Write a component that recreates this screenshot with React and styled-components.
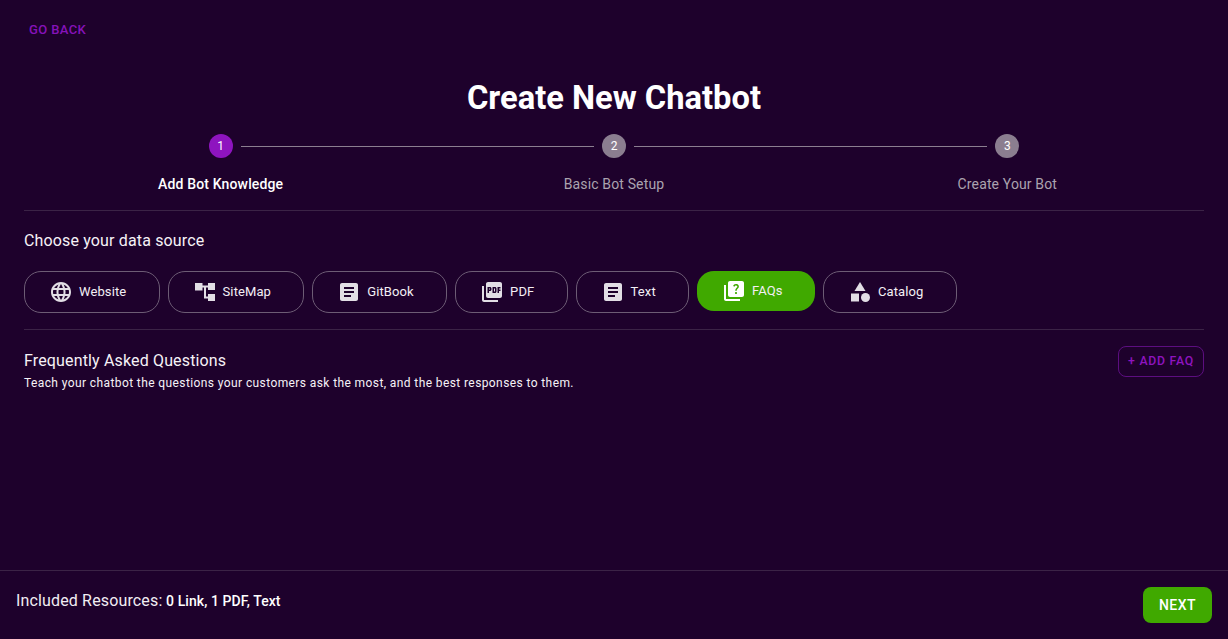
import React from "react";
import styled, { createGlobalStyle } from "styled-components";
import { MdLanguage, MdArticle, MdPictureAsPdf, MdQuiz, MdCategory } from "react-icons/md";

const GlobalStyle = createGlobalStyle`
  html, body {
    margin: 0;
    padding: 0;
    height: 100%;
    background: #1e012c;
  }
  body {
    font-family: Roboto, "Liberation Sans", sans-serif;
    color: #fff;
  }
  * {
    box-sizing: border-box;
  }
`;

const Page = styled.div`
  height: 639px;
  overflow: hidden;
  display: flex;
  flex-direction: column;
`;

const Content = styled.main`
  flex: 1;
  padding: 0 24px;
`;

const BackLink = styled.a`
  display: block;
  width: fit-content;
  padding: 21px 5px 0;
  font-size: 13px;
  line-height: 18px;
  font-weight: 500;
  letter-spacing: 0.37px;
  color: #8612b9;
`;

const Title = styled.h1`
  margin: 40px 0 0;
  text-align: center;
  font-size: 32.7px;
  line-height: 38px;
  font-weight: 700;
`;

const StepRow = styled.div`
  display: grid;
  grid-template-columns: 1fr 24px 2fr 24px 2fr 24px 1fr;
  align-items: center;
  margin-top: 17px;
`;

const StepDot = styled.div`
  grid-column: ${(p) => p.$col};
  width: 24px;
  height: 24px;
  border-radius: 50%;
  display: flex;
  align-items: center;
  justify-content: center;
  font-size: 12px;
  color: #fff;
  background: ${(p) => (p.$active ? "#8e14bf" : "#8b7e90")};
`;

const StepLine = styled.div`
  height: 1px;
  margin: 0 8px;
  background: #8b7e90;
`;

const StepLabels = styled.div`
  display: grid;
  grid-template-columns: repeat(3, 1fr);
  margin-top: 16px;
`;

const StepLabel = styled.div`
  text-align: center;
  font-size: 14px;
  line-height: 20px;
  letter-spacing: 0.14px;
  font-weight: ${(p) => (p.$active ? 500 : 400)};
  color: ${(p) => (p.$active ? "#fff" : "#aba3af")};
`;

const Divider = styled.hr`
  margin: ${(p) => p.$margin};
  border: 0;
  height: 1px;
  background: #3b2346;
`;

const SectionLabel = styled.div`
  margin-top: 20px;
  font-size: 16px;
  line-height: 20px;
  letter-spacing: 0.15px;
  color: #f6f2f7;
`;

const SourceRow = styled.div`
  display: flex;
  align-items: flex-start;
  gap: 8px;
  margin-top: 20px;
`;

const SourceButton = styled.button`
  display: flex;
  align-items: center;
  gap: 6px;
  height: ${(p) => (p.$selected ? "40px" : "42px")};
  padding: 0 32.3px 0 ${(p) => (p.$selected ? "25px" : "24px")};
  border: ${(p) => (p.$selected ? "0" : "1px solid #6d5c75")};
  border-radius: 17px;
  background: ${(p) => (p.$selected ? "#40a900" : "transparent")};
  color: #f3eff5;
  font-family: inherit;
  font-size: 13px;
  letter-spacing: 0.1px;
  svg {
    width: 24px;
    height: 24px;
    color: ${(p) => (p.$selected ? "#fff" : "#e2dee5")};
  }
`;

const SourceName = styled.span`
  padding-bottom: 2px;
`;

const FaqHeader = styled.div`
  display: flex;
  justify-content: space-between;
  align-items: flex-start;
`;

const FaqTitle = styled.div`
  margin-top: 5px;
  font-size: 16px;
  line-height: 20px;
  letter-spacing: 0.15px;
  color: #f6f2f7;
`;

const FaqHint = styled.div`
  margin-top: 3px;
  font-size: 12px;
  line-height: 18px;
  letter-spacing: 0.4px;
  color: #f6f2f7;
`;

const AddButton = styled.button`
  height: 31px;
  padding: 0 9px 2px;
  border: 1px solid #5c0e80;
  border-radius: 8px;
  background: transparent;
  color: #8e14bf;
  font-family: inherit;
  font-size: 12.25px;
  font-weight: 500;
  letter-spacing: 0.75px;
`;

const Footer = styled.footer`
  height: 69px;
  display: flex;
  justify-content: space-between;
  align-items: flex-start;
  padding: 16px 16px 0;
  border-top: 1px solid #3b2346;
`;

const Resources = styled.div`
  margin-top: 4px;
  font-size: 16px;
  line-height: 20px;
  letter-spacing: 0.15px;
  color: #f1edf3;
`;

const ResourceCount = styled.span`
  margin-left: -0.5px;
  font-size: 14px;
  font-weight: 500;
  letter-spacing: 0.07px;
  color: #fff;
`;

const NextButton = styled.button`
  width: 69px;
  height: 36px;
  border: 0;
  border-radius: 8px;
  background: #40a900;
  color: #fff;
  font-family: inherit;
  font-size: 14px;
  font-weight: 500;
  letter-spacing: 0.45px;
`;

// the sitemap glyph in the picture is not in the icon packages
function SiteMapIcon() {
  return (
    <svg viewBox="0 0 24 24" fill="currentColor">
      <path d="M2 3h7.5v2.5H15V3h7v7h-7V7.5h-2v9h2V14h7v7h-7v-2.5h-4v-11H9.5v3H2z" />
    </svg>
  );
}

const sources = [
  { label: "Website", Icon: MdLanguage },
  { label: "SiteMap", Icon: SiteMapIcon },
  { label: "GitBook", Icon: MdArticle },
  { label: "PDF", Icon: MdPictureAsPdf },
  { label: "Text", Icon: MdArticle },
  { label: "FAQs", Icon: MdQuiz, selected: true },
  { label: "Catalog", Icon: MdCategory },
];

export default function App() {
  return (
    <Page>
      <GlobalStyle />
      <Content>
        <BackLink>GO BACK</BackLink>
        <Title>Create New Chatbot</Title>
        <StepRow>
          <StepDot $col={2} $active>1</StepDot>
          <StepLine />
          <StepDot $col={4}>2</StepDot>
          <StepLine />
          <StepDot $col={6}>3</StepDot>
        </StepRow>
        <StepLabels>
          <StepLabel $active>Add Bot Knowledge</StepLabel>
          <StepLabel>Basic Bot Setup</StepLabel>
          <StepLabel>Create Your Bot</StepLabel>
        </StepLabels>
        <Divider $margin="16px 0 0" />
        <SectionLabel>Choose your data source</SectionLabel>
        <SourceRow>
          {sources.map(({ label, Icon, selected }) => (
            <SourceButton key={label} $selected={selected}>
              <Icon />
              <SourceName>{label}</SourceName>
            </SourceButton>
          ))}
        </SourceRow>
        <Divider $margin="16px 0" />
        <FaqHeader>
          <div>
            <FaqTitle>Frequently Asked Questions</FaqTitle>
            <FaqHint>Teach your chatbot the questions your customers ask the most, and the best responses to them.</FaqHint>
          </div>
          <AddButton>+ ADD FAQ</AddButton>
        </FaqHeader>
      </Content>
      <Footer>
        <Resources>
          Included Resources: <ResourceCount>0 Link, 1 PDF, Text</ResourceCount>
        </Resources>
        <NextButton>NEXT</NextButton>
      </Footer>
    </Page>
  );
}
